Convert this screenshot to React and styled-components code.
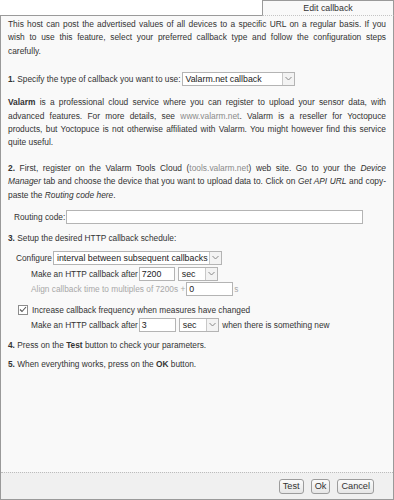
import React from 'react'
import styled, { createGlobalStyle } from 'styled-components'

const Global = createGlobalStyle`
  html, body {
    margin: 0;
    padding: 0;
    background: #fff;
  }
  body {
    font-family: "Liberation Sans", Arial, sans-serif;
    font-size: 8.3px;
    color: #333;
  }
`

const Frame = styled.div`
  width: 394px;
  height: 500px;
  display: flex;
  flex-direction: column;
`
const TabBar = styled.div`
  display: flex;
  height: 16px;
`
const TabSpacer = styled.div`
  flex: 1;
  border-bottom: 1px solid #9a9a9a;
`
const Tab = styled.div`
  width: 130px;
  border: 1px solid #9a9a9a;
  border-bottom: 1px dotted #c4c4c4;
  background: #f9f9f9;
  display: flex;
  align-items: center;
  justify-content: center;
  font-size: 8.8px;
`
const Panel = styled.div`
  flex: 1;
  display: flex;
  flex-direction: column;
  background: #f9f9f9;
  border: 1px solid #9a9a9a;
  border-top: none;
`
const Content = styled.div`
  flex: 1;
  padding: 2px 7px 0 7px;
`
const Para = styled.p`
  margin: 0 0 ${({ $gap }) => $gap || 13}px 0;
  font-size: 8.4px;
  line-height: 13.4px;
  text-align: justify;
`
const Row = styled.div`
  display: flex;
  align-items: center;
  gap: ${({ $gap }) => $gap || 1}px;
  padding-left: ${({ $indent }) => $indent || 0}px;
  height: ${({ $h }) => $h || 15}px;
  margin-bottom: ${({ $mb }) => $mb || 0}px;
  color: ${({ $muted }) => ($muted ? '#a8a8a8' : 'inherit')};
`
const Link = styled.span`
  color: #8a8a8a;
`
const Field = styled.div`
  box-sizing: border-box;
  width: ${({ $w }) => $w}px;
  height: 14px;
  border: 1px solid #b4b4b4;
  background: #fff;
  padding: 0 2px;
  display: flex;
  align-items: center;
  color: #222;
  font-size: 8.8px;
`
const Select = styled.div`
  box-sizing: border-box;
  width: ${({ $w }) => $w}px;
  height: 14px;
  border: 1px solid #b4b4b4;
  background: #fff;
  display: flex;
  align-items: stretch;
  color: #222;
  font-size: 8.8px;
  margin-left: ${({ $ml }) => $ml || 0}px;
`
const SelectText = styled.div`
  flex: 1;
  padding-left: 3px;
  display: flex;
  align-items: center;
  white-space: nowrap;
  overflow: hidden;
`
const Arrow = styled.div`
  width: 11px;
  border-left: 1px solid #c8c8c8;
  background: #f3f3f3;
  display: flex;
  align-items: center;
  justify-content: center;
`
const Check = styled.div`
  box-sizing: border-box;
  width: 10px;
  height: 10px;
  border: 1px solid #8c8c8c;
  background: #fff;
  display: flex;
  align-items: center;
  justify-content: center;
  margin-right: 3px;
`
const Footer = styled.div`
  height: 26px;
  border-top: 1px dotted #bcbcbc;
  background: #f0f0f0;
  display: flex;
  align-items: center;
  justify-content: flex-end;
  gap: 7px;
  padding-right: 19px;
`
const Button = styled.div`
  box-sizing: border-box;
  height: 15px;
  min-width: ${({ $w }) => $w}px;
  padding: 0 3px;
  border: 1px solid #9c9c9c;
  border-radius: 3px;
  background: linear-gradient(#fbfbfb, #e6e6e6);
  display: flex;
  align-items: center;
  justify-content: center;
  font-size: 9.2px;
  color: #333;
`

const Chevron = () => (
  <svg width="7" height="5" viewBox="0 0 7 5">
    <path d="M0.5 1 L3.5 4 L6.5 1" fill="none" stroke="#888" strokeWidth="1" />
  </svg>
)

const Dropdown = ({ w, ml, children }) => (
  <Select $w={w} $ml={ml}>
    <SelectText>{children}</SelectText>
    <Arrow>
      <Chevron />
    </Arrow>
  </Select>
)

export default function App() {
  return (
    <Frame>
      <Global />
      <TabBar>
        <TabSpacer />
        <Tab>Edit callback</Tab>
      </TabBar>
      <Panel>
        <Content>
          <Para $gap={12}>
            This host can post the advertised values of all devices to a specific URL on a
            regular basis. If you wish to use this feature, select your preferred callback type
            and follow the configuration steps carefully.
          </Para>
          <Row $h={17} $gap={1} $mb={9}>
            <span>
              <b>1.</b> Specify the type of callback you want to use:
            </span>
            <Dropdown w={113}>Valarm.net callback</Dropdown>
          </Row>
          <Para $gap={12}>
            <b>Valarm</b> is a professional cloud service where you can register to upload your
            sensor data, with advanced features. For more details, see{' '}
            <Link>www.valarm.net</Link>. Valarm is a reseller for Yoctopuce products, but
            Yoctopuce is not otherwise affiliated with Valarm. You might however find this service
            quite useful.
          </Para>
          <Para $gap={7}>
            <b>2.</b> First, register on the Valarm Tools Cloud (<Link>tools.valarm.net</Link>)
            web site. Go to your the <i>Device Manager</i> tab and choose the device that you want
            to upload data to. Click on <i>Get API URL</i> and copy-paste the{' '}
            <i>Routing code here</i>.
          </Para>
          <Row $indent={6} $h={16} $mb={5}>
            <span>Routing code:</span>
            <Field $w={297} />
          </Row>
          <Row $h={15} $mb={5}>
            <span>
              <b>3.</b> Setup the desired HTTP callback schedule:
            </span>
          </Row>
          <Row $indent={8} $h={15} $mb={1}>
            <span>Configure</span>
            <Dropdown w={169}>interval between subsequent callbacks</Dropdown>
          </Row>
          <Row $indent={23} $h={15}>
            <span>Make an HTTP callback after</span>
            <Field $w={36}>7200</Field>
            <Dropdown w={40} ml={2}>
              sec
            </Dropdown>
          </Row>
          <Row $indent={23} $h={15} $muted $mb={6}>
            <span>Align callback time to multiples of 7200s +</span>
            <Field $w={47}>0</Field>
            <span>s</span>
          </Row>
          <Row $indent={10} $h={15}>
            <Check>
              <svg width="8" height="7" viewBox="0 0 8 7">
                <path d="M1 3.5 L3 5.5 L7 1" fill="none" stroke="#555" strokeWidth="1.1" />
              </svg>
            </Check>
            <span>Increase callback frequency when measures have changed</span>
          </Row>
          <Row $indent={23} $h={15} $mb={5}>
            <span>Make an HTTP callback after</span>
            <Field $w={37}>3</Field>
            <Dropdown w={40} ml={2}>
              sec
            </Dropdown>
            <span>&nbsp;when there is something new</span>
          </Row>
          <Row $h={15} $mb={4}>
            <span>
              <b>4.</b> Press on the <b>Test</b> button to check your parameters.
            </span>
          </Row>
          <Row $h={15}>
            <span>
              <b>5.</b> When everything works, press on the <b>OK</b> button.
            </span>
          </Row>
        </Content>
        <Footer>
          <Button $w={20}>Test</Button>
          <Button $w={17}>Ok</Button>
          <Button $w={33}>Cancel</Button>
        </Footer>
      </Panel>
    </Frame>
  )
}
